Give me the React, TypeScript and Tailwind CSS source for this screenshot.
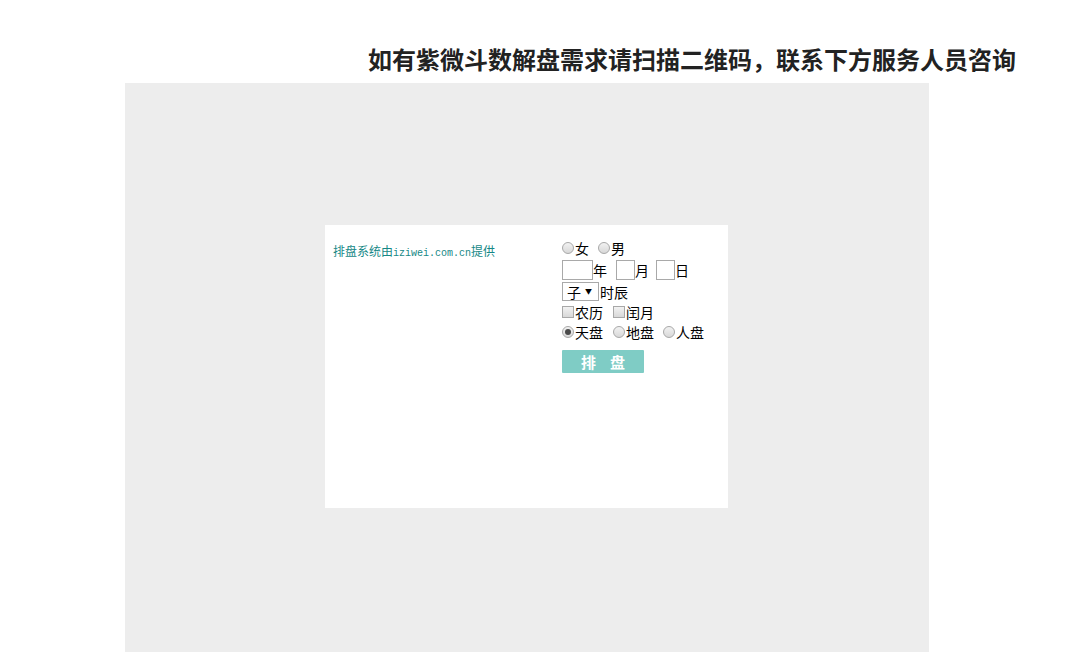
import React from "react";

const cjk = { fontFamily: '"Noto Sans CJK SC", "Noto Sans", sans-serif' };

function Radio({ checked = false }: { checked?: boolean }) {
  return (
    <span className="inline-flex h-[12px] w-[12px] shrink-0 items-center justify-center rounded-full border border-[#a8a8a8] bg-gradient-to-b from-[#f2f2f2] to-[#d8d8d8]">
      {checked && <span className="h-[6px] w-[6px] rounded-full bg-[#4a4a4a]" />}
    </span>
  );
}

function Check() {
  return (
    <span className="inline-block h-[12px] w-[12px] shrink-0 border border-[#a8a8a8] bg-gradient-to-b from-[#f2f2f2] to-[#d8d8d8]" />
  );
}

function Box({ w }: { w: string }) {
  return <span className={`inline-block h-[20px] ${w} shrink-0 border border-[#a9a9a9] bg-white`} />;
}

export default function App() {
  return (
    <div className="h-[668px] w-[1085px] overflow-hidden bg-white" style={cjk}>
      <div className="flex h-[83px] justify-end pr-[69px] pt-[45px]">
        <h2 className="text-[24px] font-bold leading-[28px] text-[#222222]">
          如有紫微斗数解盘需求请扫描二维码，联系下方服务人员咨询
        </h2>
      </div>
      <div className="ml-[125px] h-[569px] w-[804px] bg-[#ededed] pl-[200px] pt-[142px]">
        <div className="flex h-[283px] w-[403px] bg-white">
          <div className="w-[237px] pl-[8px] pt-[18px]">
            <p className="text-[12px] leading-[16px] text-[#168886]" style={cjk}>
              排盘系统由
              <span className="text-[10px]" style={{ fontFamily: '"Liberation Mono", monospace' }}>
                iziwei.com.cn
              </span>
              提供
            </p>
          </div>
          <div className="flex flex-col pt-[13px] text-[14px] leading-[20px] text-black">
            <div className="flex h-[20px] items-center">
              <Radio />
              <span className="ml-[1px]">女</span>
              <span className="ml-[9px] flex"><Radio /></span>
              <span className="ml-[1px]">男</span>
            </div>
            <div className="flex h-[23px] items-center">
              <Box w="w-[31px]" />
              <span>年</span>
              <span className="ml-[9px] flex"><Box w="w-[19px]" /></span>
              <span>月</span>
              <span className="ml-[7px] flex"><Box w="w-[19px]" /></span>
              <span>日</span>
            </div>
            <div className="flex h-[21px] items-center">
              <span className="flex h-[19px] w-[37px] items-center border border-[#a9a9a9] bg-white pl-[4px] text-[14px]">
                <span>子</span>
                <span className="ml-[4px] text-[7px] leading-none">▼</span>
              </span>
              <span className="ml-[1px]">时辰</span>
            </div>
            <div className="flex h-[20px] items-center">
              <Check />
              <span className="ml-[1px]">农历</span>
              <span className="ml-[10px] flex"><Check /></span>
              <span className="ml-[1px]">闰月</span>
            </div>
            <div className="flex h-[20px] items-center">
              <Radio checked />
              <span className="ml-[1px]">天盘</span>
              <span className="ml-[10px] flex"><Radio /></span>
              <span className="ml-[1px]">地盘</span>
              <span className="ml-[9px] flex"><Radio /></span>
              <span className="ml-[1px]">人盘</span>
            </div>
            <button className="mt-[8px] flex h-[23px] w-[82px] items-center justify-center rounded-[1px] bg-[#7fccc5] text-[15px] font-bold tracking-[14px] text-white" style={{ paddingLeft: 14 }}>
              排盘
            </button>
          </div>
        </div>
      </div>
    </div>
  );
}
